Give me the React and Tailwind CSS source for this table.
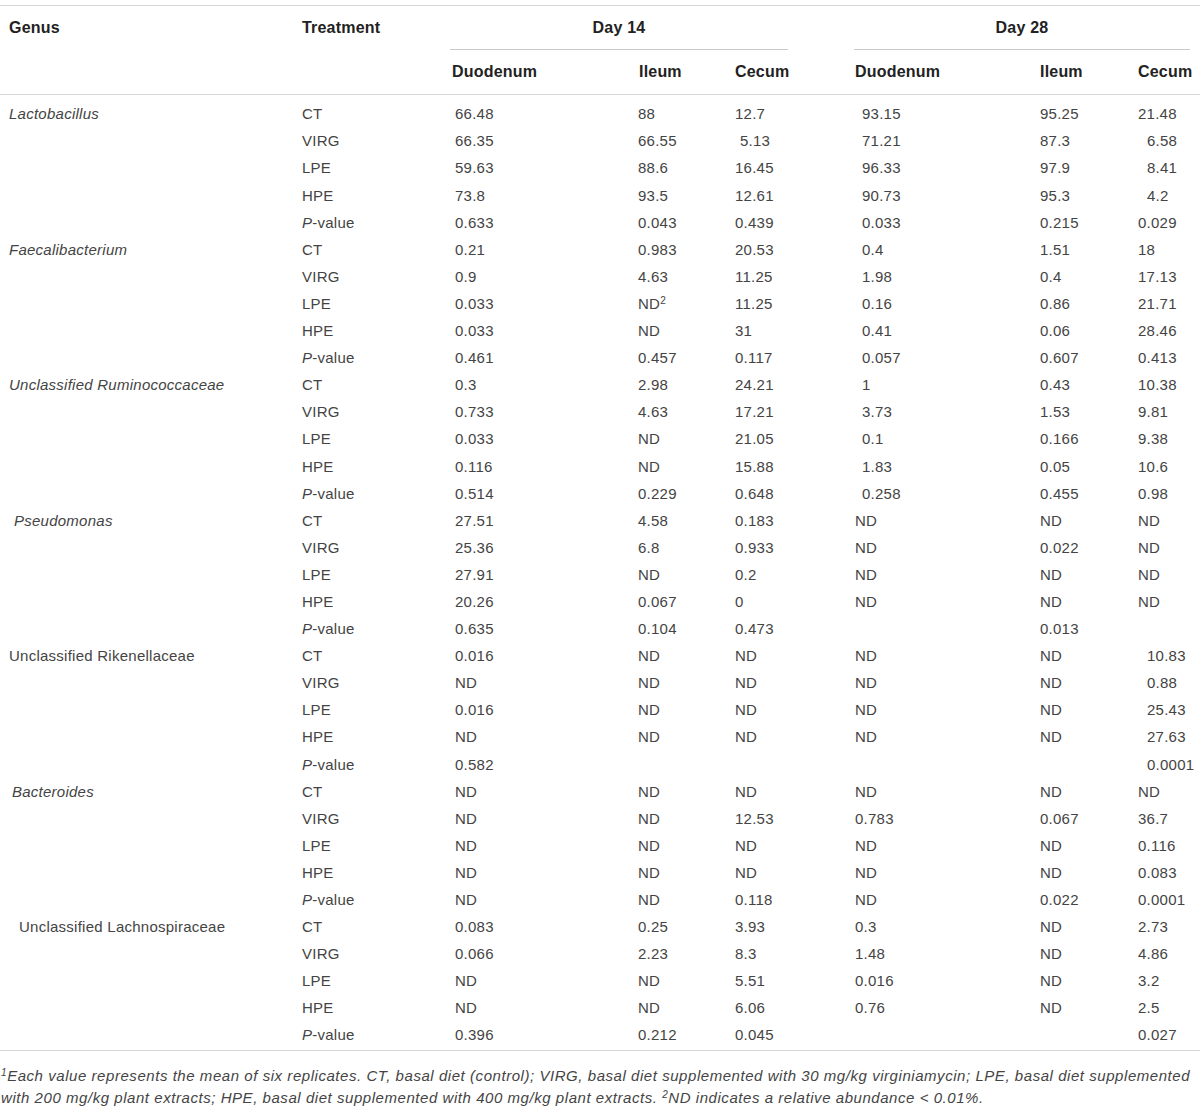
import React from 'react';

const cols = 'grid grid-cols-[302px_150px_186px_97px_120px_185px_98px_62px]';

// '_' prefix = small extra indent in the source table
const genera = [
  {
    name: 'Lactobacillus', italic: true, pad: 'pl-[9px]', shiftD28: true,
    rows: [
      ['66.48', '88', '12.7', '93.15', '95.25', '21.48'],
      ['66.35', '66.55', '_5.13', '71.21', '87.3', '_6.58'],
      ['59.63', '88.6', '16.45', '96.33', '97.9', '_8.41'],
      ['73.8', '93.5', '12.61', '90.73', '95.3', '_4.2'],
      ['0.633', '0.043', '0.439', '0.033', '0.215', '0.029'],
    ],
  },
  {
    name: 'Faecalibacterium', italic: true, pad: 'pl-[9px]', shiftD28: true,
    rows: [
      ['0.21', '0.983', '20.53', '0.4', '1.51', '18'],
      ['0.9', '4.63', '11.25', '1.98', '0.4', '17.13'],
      ['0.033', 'ND2', '11.25', '0.16', '0.86', '21.71'],
      ['0.033', 'ND', '31', '0.41', '0.06', '28.46'],
      ['0.461', '0.457', '0.117', '0.057', '0.607', '0.413'],
    ],
  },
  {
    name: 'Unclassified Ruminococcaceae', italic: true, pad: 'pl-[9px]', shiftD28: true,
    rows: [
      ['0.3', '2.98', '24.21', '1', '0.43', '10.38'],
      ['0.733', '4.63', '17.21', '3.73', '1.53', '9.81'],
      ['0.033', 'ND', '21.05', '0.1', '0.166', '9.38'],
      ['0.116', 'ND', '15.88', '1.83', '0.05', '10.6'],
      ['0.514', '0.229', '0.648', '0.258', '0.455', '0.98'],
    ],
  },
  {
    name: 'Pseudomonas', italic: true, pad: 'pl-[14px]',
    rows: [
      ['27.51', '4.58', '0.183', 'ND', 'ND', 'ND'],
      ['25.36', '6.8', '0.933', 'ND', '0.022', 'ND'],
      ['27.91', 'ND', '0.2', 'ND', 'ND', 'ND'],
      ['20.26', '0.067', '0', 'ND', 'ND', 'ND'],
      ['0.635', '0.104', '0.473', '', '0.013', ''],
    ],
  },
  {
    name: 'Unclassified Rikenellaceae', italic: false, pad: 'pl-[9px]',
    rows: [
      ['0.016', 'ND', 'ND', 'ND', 'ND', '_10.83'],
      ['ND', 'ND', 'ND', 'ND', 'ND', '_0.88'],
      ['0.016', 'ND', 'ND', 'ND', 'ND', '_25.43'],
      ['ND', 'ND', 'ND', 'ND', 'ND', '_27.63'],
      ['0.582', '', '', '', '', '_0.0001'],
    ],
  },
  {
    name: 'Bacteroides', italic: true, pad: 'pl-[12px]',
    rows: [
      ['ND', 'ND', 'ND', 'ND', 'ND', 'ND'],
      ['ND', 'ND', '12.53', '0.783', '0.067', '36.7'],
      ['ND', 'ND', 'ND', 'ND', 'ND', '0.116'],
      ['ND', 'ND', 'ND', 'ND', 'ND', '0.083'],
      ['ND', 'ND', '0.118', 'ND', '0.022', '0.0001'],
    ],
  },
  {
    name: 'Unclassified Lachnospiraceae', italic: false, pad: 'pl-[19px]',
    rows: [
      ['0.083', '0.25', '3.93', '0.3', 'ND', '2.73'],
      ['0.066', '2.23', '8.3', '1.48', 'ND', '4.86'],
      ['ND', 'ND', '5.51', '0.016', 'ND', '3.2'],
      ['ND', 'ND', '6.06', '0.76', 'ND', '2.5'],
      ['0.396', '0.212', '0.045', '', '', '0.027'],
    ],
  },
];

const treatments = ['CT', 'VIRG', 'LPE', 'HPE', 'P'];

const Value = ({ v, base, extra }) => {
  const indented = v.startsWith('_');
  const text = indented ? v.slice(1) : v;
  return (
    <div className={`${base} ${indented ? extra : ''} whitespace-nowrap`}>
      {text === 'ND2' ? (
        <span>ND<sup className="text-[10px]">2</sup></span>
      ) : text}
    </div>
  );
};

export default function App() {
  return (
    <div
      className="w-[1200px] h-[1112px] bg-white text-[15px] tracking-[0.25px] text-[#444]"
      style={{ fontFamily: '"Liberation Sans", Arial, sans-serif' }}
    >
      <div className="pt-[5px]">
        {/* Header */}
        <div className="border-t border-[#d6d6d6]">
          <div className={`${cols} h-[44px] items-center font-bold text-[16px] tracking-[0.2px] text-[#222]`}>
            <div className="pl-[9px]">Genus</div>
            <div>Treatment</div>
            <div className="col-span-3 h-full flex flex-col">
              <div className="flex-1 flex items-center justify-center -ml-[2px] mr-[67px] border-b border-[#c8c8c8]">
                Day 14
              </div>
            </div>
            <div className="col-span-3 h-full flex flex-col">
              <div className="flex-1 flex items-center justify-center -ml-[1px] mr-[10px] border-b border-[#c8c8c8]">
                Day 28
              </div>
            </div>
          </div>
          <div className={`${cols} h-[45px] items-center font-bold text-[16px] tracking-[0.2px] text-[#222] border-b border-[#d6d6d6]`}>
            <div />
            <div />
            <div>Duodenum</div>
            <div className="pl-[1px]">Ileum</div>
            <div>Cecum</div>
            <div>Duodenum</div>
            <div>Ileum</div>
            <div>Cecum</div>
          </div>
        </div>

        {/* Body */}
        <div className="pt-[6px] pb-[1px] border-b border-[#d6d6d6]">
          {genera.map((g) =>
            g.rows.map((r, i) => (
              <div key={g.name + i} className={`${cols} h-[27.1px] items-center`}>
                <div className={`${g.pad} ${g.italic ? 'italic' : ''} whitespace-nowrap`}>{i === 0 ? g.name : ''}</div>
                <div>
                  {treatments[i] === 'P' ? (
                    <span><span className="italic">P</span>-value</span>
                  ) : treatments[i]}
                </div>
                <Value v={r[0]} base="pl-[3px]" extra="" />
                <Value v={r[1]} base="" extra="" />
                <Value v={r[2]} base="" extra="pl-[5px]" />
                <Value v={r[3]} base={g.shiftD28 ? 'pl-[7px]' : ''} extra="" />
                <Value v={r[4]} base="" extra="" />
                <Value v={r[5]} base="" extra="pl-[9px]" />
              </div>
            ))
          )}
        </div>

        {/* Footnote */}
        <div className="pt-[14px] pl-[1px] italic leading-[22px] tracking-[0.55px] whitespace-nowrap">
          <sup className="text-[10px]">1</sup>Each value represents the mean of six replicates. CT, basal diet (control); VIRG, basal diet supplemented with 30 mg/kg virginiamycin; LPE, basal diet supplemented
          <br />
          with 200 mg/kg plant extracts; HPE, basal diet supplemented with 400 mg/kg plant extracts. <sup className="text-[10px]">2</sup>ND indicates a relative abundance &lt; 0.01%.
        </div>
      </div>
    </div>
  );
}
